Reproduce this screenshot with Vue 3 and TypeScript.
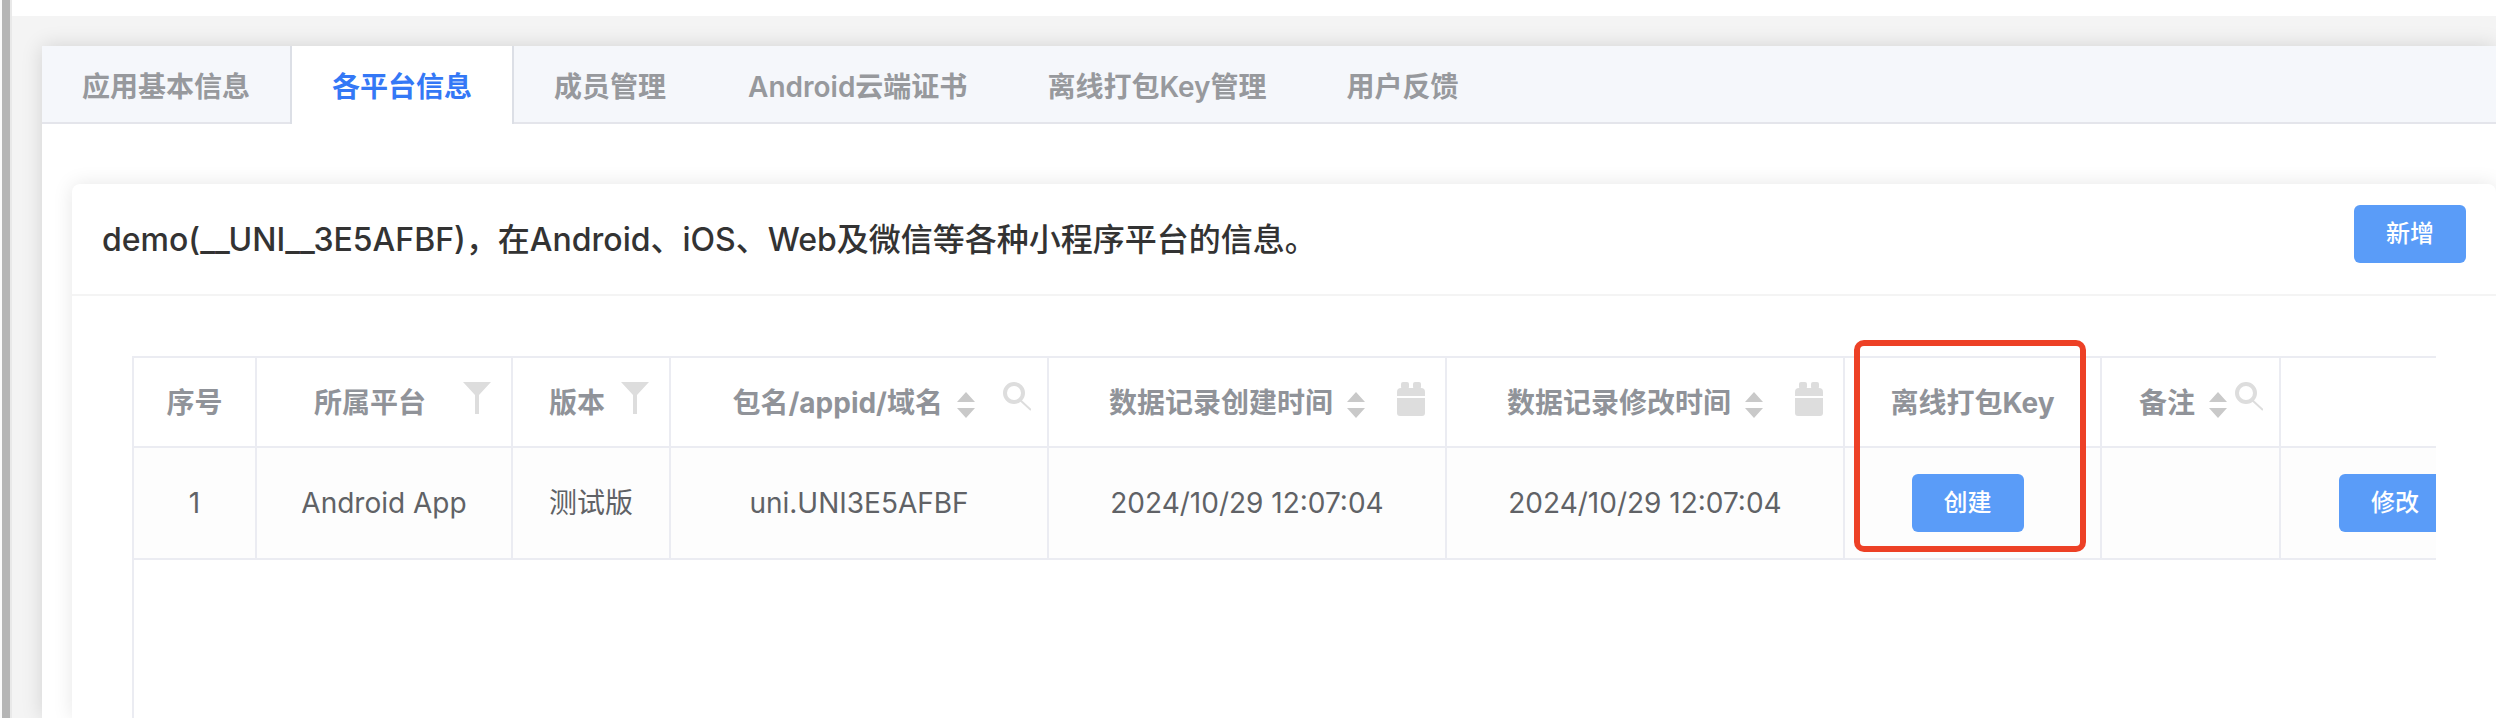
<script setup lang="ts">
type IconName = 'filter' | 'search' | 'calendar'

interface Column {
  key: string
  title: string
  sortable?: boolean
  icon?: IconName
  tight?: boolean
}

const tabs: string[] = ['应用基本信息', '各平台信息', '成员管理', 'Android云端证书', '离线打包Key管理', '用户反馈']
const activeTab = '各平台信息'

const columns: Column[] = [
  { key: 'index', title: '序号' },
  { key: 'platform', title: '所属平台', icon: 'filter' },
  { key: 'edition', title: '版本', icon: 'filter' },
  { key: 'package', title: '包名/appid/域名', sortable: true, icon: 'search' },
  { key: 'created', title: '数据记录创建时间', sortable: true, icon: 'calendar' },
  { key: 'updated', title: '数据记录修改时间', sortable: true, icon: 'calendar' },
  { key: 'offline', title: '离线打包Key' },
  { key: 'remark', title: '备注', sortable: true, icon: 'search', tight: true },
  { key: 'actions', title: '' },
]

const rows: Record<string, string>[] = [
  {
    index: '1',
    platform: 'Android App',
    edition: '测试版',
    package: 'uni.UNI3E5AFBF',
    created: '2024/10/29 12:07:04',
    updated: '2024/10/29 12:07:04',
    offline: '',
    remark: '',
    actions: '',
  },
]
</script>

<template>
  <div class="page">
    <div class="rail"></div>
    <div class="main">
      <main class="panel">
        <nav class="tabs">
          <button v-for="tab in tabs" :key="tab" type="button" class="tab" :class="{ active: tab === activeTab }">
            {{ tab }}
          </button>
        </nav>
        <div class="body">
          <section class="card">
            <header class="card-head">
              <h1>demo(__UNI__3E5AFBF)，在Android、iOS、Web及微信等各种小程序平台的信息。</h1>
              <button type="button" class="btn">新增</button>
            </header>
            <div class="table-wrap">
              <table>
                <colgroup>
                  <col v-for="c in columns" :key="c.key" :class="'w-' + c.key" />
                </colgroup>
                <thead>
                  <tr>
                    <th v-for="c in columns" :key="c.key" scope="col">
                      <div class="cell" :class="[c.icon, { sorted: c.sortable, tight: c.tight }]">
                        <span class="label">{{ c.title }}</span>
                        <svg v-if="c.sortable" class="sort" viewBox="0 0 18 26" aria-hidden="true">
                          <path d="M9 0 18 10H0ZM0 16H18L9 26Z" />
                        </svg>
                        <svg v-if="c.icon" class="icon" viewBox="0 0 28 40" aria-hidden="true">
                          <path v-if="c.icon === 'filter'" d="M0 0H28L16 13V32H12V13Z" />
                          <g v-else-if="c.icon === 'search'" class="lens">
                            <circle cx="11" cy="11" r="9" />
                            <path d="M17 18 28 28" />
                          </g>
                          <g v-else>
                            <rect x="4" y="0" width="8" height="7" rx="2" />
                            <rect x="16" y="0" width="8" height="7" rx="2" />
                            <path d="M4 6H24a4 4 0 0 1 4 4V14H0V10a4 4 0 0 1 4-4Z" />
                            <path d="M0 16H28V31a3 3 0 0 1-3 3H3a3 3 0 0 1-3-3Z" />
                          </g>
                        </svg>
                      </div>
                    </th>
                  </tr>
                </thead>
                <tbody>
                  <tr v-for="row in rows" :key="row.index">
                    <td v-for="c in columns" :key="c.key" :class="'is-' + c.key">
                      <template v-if="c.key === 'offline'">
                        <button type="button" class="btn create">创建</button>
                        <span class="highlight"></span>
                      </template>
                      <button v-else-if="c.key === 'actions'" type="button" class="btn">修改</button>
                      <template v-else>{{ row[c.key] }}</template>
                    </td>
                  </tr>
                </tbody>
              </table>
            </div>
          </section>
        </div>
      </main>
    </div>
  </div>
</template>

<style>
body {
  margin: 0;
  background: #fff;
}
</style>

<style scoped>
* {
  box-sizing: border-box;
}
.page {
  display: flex;
  height: 100vh;
  overflow: hidden;
  font-family: Inter, 'Noto Sans CJK SC', sans-serif;
  font-size: 28px;
  line-height: 40px;
  color: #606266;
}
.rail {
  flex: none;
  width: 12px;
  border-left: 2px solid #fafafa;
  border-right: 2px solid #e9e9e9;
  background: #b5b5b5;
  background-clip: padding-box;
}
.main {
  flex: 1;
  min-width: 0;
  display: flex;
  padding: 30px 0 0 30px;
  border-top: 16px solid #fff;
  background: #f4f4f4;
}
.panel {
  flex: 1;
  min-width: 0;
  display: flex;
  flex-direction: column;
  background: #fff;
  box-shadow: 0 0 20px rgba(0, 0, 0, 0.14);
}
.tabs {
  display: flex;
  height: 78px;
  background: #f5f7fb;
  border-bottom: 2px solid #e4e5eb;
}
.tab {
  height: 78px;
  padding: 4px 40px 0;
  border: 0;
  border-right: 2px solid transparent;
  background: none;
  font: inherit;
  font-weight: 600;
  color: #97999d;
  white-space: nowrap;
}
.tab:first-child {
  border-right: 0;
}
.tab:nth-child(n + 4) {
  border-right: 0;
}
.tab.active {
  border-left: 2px solid #dcdfe6;
  border-right-color: #dcdfe6;
  background: #fff;
  color: #3478f6;
}
.body {
  flex: 1;
  display: flex;
  padding: 60px 0 0 30px;
}
.card {
  flex: 1;
  min-width: 0;
  display: flex;
  flex-direction: column;
  border-radius: 8px 8px 0 0;
  background: #fff;
  box-shadow: 0 0 20px rgba(0, 0, 0, 0.1);
}
.card-head {
  display: flex;
  align-items: center;
  justify-content: space-between;
  height: 112px;
  padding: 2px 30px 0;
  border-bottom: 2px solid #f4f4f4;
}
h1 {
  margin: 0;
  font-size: 32px;
  line-height: 48px;
  font-weight: 500;
  color: #333;
  white-space: nowrap;
}
.btn {
  width: 112px;
  height: 58px;
  padding: 0;
  border: 0;
  border-radius: 6px;
  background: #5a9cf8;
  color: #fff;
  font: inherit;
  font-size: 24px;
  font-weight: 500;
  vertical-align: middle;
}
.card-head .btn {
  margin-bottom: 12px;
}
.table-wrap {
  flex: 1;
  margin: 60px 60px 0;
  border-left: 2px solid #ebecf2;
  /* clips the wide table sideways while the highlight may rise above its top edge */
  clip-path: inset(-20px 0 0 0);
}
table {
  width: 2448px;
  table-layout: fixed;
  border-collapse: separate;
  border-spacing: 0;
}
.w-index { width: 123px; }
.w-platform { width: 256px; }
.w-edition { width: 158px; }
.w-package { width: 378px; }
.w-created { width: 398px; }
.w-updated { width: 398px; }
.w-offline { width: 257px; }
.w-remark { width: 179px; }
th,
td {
  padding: 0;
  border-right: 2px solid #ebecf2;
  border-bottom: 2px solid #ebecf2;
  text-align: center;
  white-space: nowrap;
}
th {
  height: 92px;
  border-top: 2px solid #ebecf2;
  font-weight: 700;
  color: #909399;
}
td {
  height: 112px;
  background: #fdfdfd;
}
.cell {
  display: flex;
  align-items: center;
  justify-content: center;
  padding: 0 20px;
}
.label {
  flex: 1;
  padding-top: 2px;
}
.sorted .label {
  flex: none;
}
.sorted {
  justify-content: flex-end;
}
.sort {
  width: 18px;
  height: 26px;
  margin: 6px 32px 0 14px;
  fill: #c9c9c9;
}
.search {
  padding-right: 16px;
}
.search .sort {
  margin-right: 28px;
}
.tight .sort {
  margin-right: 8px;
}
.icon {
  width: 28px;
  height: 40px;
  fill: #ddd;
}
.lens {
  fill: none;
  stroke: #ddd;
  stroke-width: 4;
}
.lens path {
  stroke-width: 2;
}
.is-offline {
  position: relative;
}
.create {
  margin-right: 10px;
}
.highlight {
  position: absolute;
  left: 9px;
  bottom: 6px;
  width: 232px;
  height: 212px;
  border: 6px solid #ed4126;
  border-radius: 10px;
  pointer-events: none;
}
.is-actions {
  padding-left: 58px;
  text-align: left;
}
</style>
